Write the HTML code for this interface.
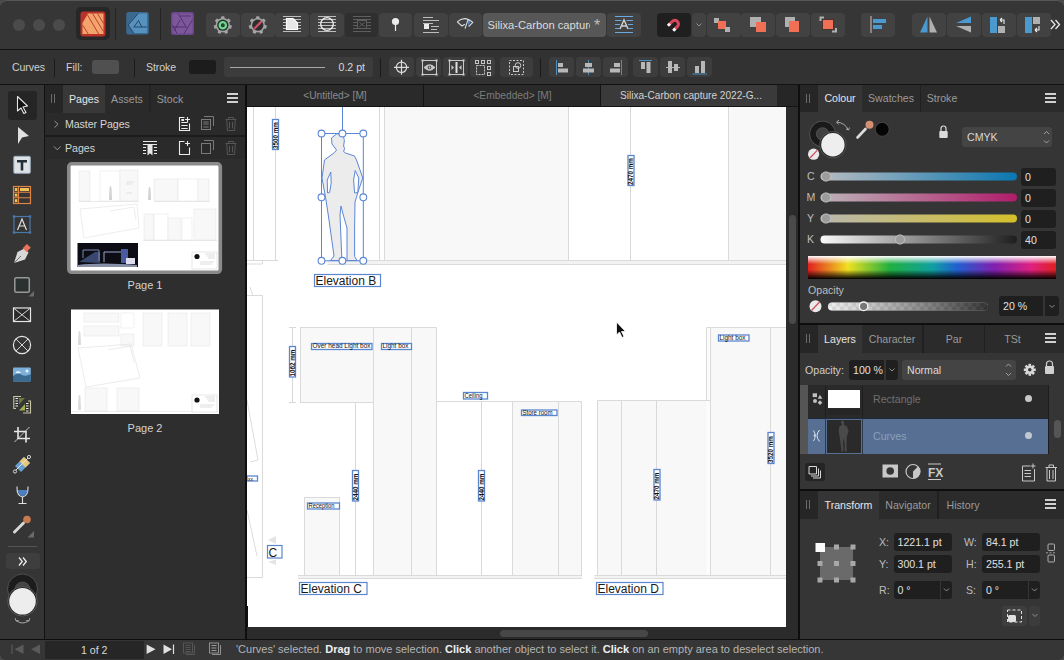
<!DOCTYPE html>
<html><head><meta charset="utf-8">
<style>
*{box-sizing:border-box;margin:0;padding:0}
html,body{width:1064px;height:660px;overflow:hidden;background:#4a4a4a}
body{position:relative;font-family:"Liberation Sans",sans-serif;color:#d8d8d8;font-size:12px;-webkit-font-smoothing:antialiased}
.a{position:absolute}
.btn{position:absolute;top:13px;height:24px;width:34px;background:#424242;border-radius:4px}
.cbtn{position:absolute;top:57px;height:20px;width:25px;background:#3d3d3d;border-radius:4px}
.sep{position:absolute;width:1px;background:#1f1f1f}
.tab{position:absolute;top:0;height:27px;line-height:27px;text-align:center;font-size:10.6px;color:#9a9a9a}
.tab.on{background:#383838;color:#e6e6e6}
.grip{position:absolute;left:0;top:0;width:18px;height:27px;background:#262626}
.grip:before{content:"";position:absolute;left:6px;top:9px;width:1px;height:9px;background:#6a6a6a;box-shadow:3px 0 0 #6a6a6a}
.ham{position:absolute;width:11px;height:10px;border-top:2px solid #d0d0d0;border-bottom:2px solid #d0d0d0}
.ham:before{content:"";position:absolute;left:0;top:2px;width:11px;height:2px;background:#d0d0d0}
.fld{position:absolute;background:#1f1f1f;border-radius:3px;color:#e0e0e0;font-size:10.6px;padding-left:4px;white-space:nowrap;overflow:hidden}
</style></head><body>

<!-- TOP TOOLBAR -->
<div class="a" id="top" style="left:0;top:0;width:1064px;height:49px;background:#363636;border-top:1px solid #575757;border-radius:7px 7px 0 0"></div>
<div class="a" style="left:0;top:49px;width:1064px;height:1px;background:#121212"></div>
<div class="a" style="left:13px;top:19px;width:12px;height:12px;border-radius:6px;background:#4b4b4b"></div>
<div class="a" style="left:33px;top:19px;width:12px;height:12px;border-radius:6px;background:#4b4b4b"></div>
<div class="a" style="left:53px;top:19px;width:12px;height:12px;border-radius:6px;background:#4b4b4b"></div>
<div class="a" style="left:76px;top:7px;width:34px;height:33px;border-radius:5px;background:#272727"></div>
<div class="sep" style="left:115px;top:8px;height:32px;background:#242424"></div>
<div class="sep" style="left:160px;top:8px;height:32px;background:#242424"></div>
<div class="btn" style="left:206px"></div>
<div class="btn" style="left:241px"></div>
<div class="btn" style="left:275px"></div>
<div class="btn" style="left:310px"></div>
<div class="btn" style="left:345px;width:33px;background:#2f2f2f"></div>
<div class="btn" style="left:379px;width:33px"></div>
<div class="btn" style="left:414px"></div>
<div class="btn" style="left:449px;width:33px"></div>
<div class="btn" style="left:483px;width:123px;background:#575757"></div>
<div class="a" style="left:487.5px;top:14px;height:22px;line-height:22px;font-size:11.2px;color:#dcdcdc;width:102px;overflow:hidden;white-space:nowrap">Silixa-Carbon capture 2022</div>
<div class="btn" style="left:607px"></div>
<div class="btn" style="left:657px;background:#1f1f1f"></div>
<div class="btn" style="left:692px;width:14px"></div>
<div class="btn" style="left:707px"></div>
<div class="btn" style="left:741px"></div>
<div class="btn" style="left:776px"></div>
<div class="btn" style="left:811px"></div>
<div class="btn" style="left:861px"></div>
<div class="btn" style="left:912px"></div>
<div class="btn" style="left:947px"></div>
<div class="btn" style="left:982px"></div>
<div class="btn" style="left:1017px"></div>
<svg class="a" style="left:0;top:0" width="1064" height="50" viewBox="0 0 1064 50">
 <!-- publisher -->
 <rect x="80.5" y="11.5" width="25" height="25" rx="3" fill="#b9332a"/>
 <path d="M88 13.5 H103.5 V34 H82.5 V23 Z" fill="#f3a36c"/>
 <g stroke="#b9332a" stroke-width="0.9">
  <line x1="87.5" y1="15" x2="99" y2="34.5"/><line x1="92.5" y1="13.5" x2="103.5" y2="31.5"/><line x1="97.5" y1="13.5" x2="103.5" y2="23.5"/><line x1="83" y1="25.5" x2="88.5" y2="34.5"/>
 </g>
 <!-- designer -->
 <rect x="126.2" y="12" width="22.6" height="22.6" rx="2.5" fill="#3a6890"/>
 <path d="M138.2 13.5 H147.2 V33 H133.8 L128.2 25 Z" fill="#5592bd"/>
 <path d="M138.2 13.5 L128.2 25 L133.8 33" fill="none" stroke="#27476a" stroke-width="1"/>
 <path d="M133.5 27 H147.2 M134 27 L138.5 20.5 L141.8 27" fill="none" stroke="#27476a" stroke-width="1"/>
 <!-- photo -->
 <rect x="171" y="12" width="23" height="23" rx="2.5" fill="#6a4788"/>
 <rect x="172.5" y="13.5" width="20" height="20" rx="1.5" fill="#7d569c"/>
 <g stroke="#4e3068" stroke-width="0.9" fill="none">
  <path d="M178 13.5 L186.5 27.5 M191 16 L180 16 M192.5 20 L184 33.5 M172.5 27 L186 27 M174 31 L180 20 M177 33.5 L172.5 25"/>
 </g>
 <!-- gears -->
 <g transform="translate(222.8,25.2)">
  <g fill="#a4a4a4"><circle r="7.2"/><rect x="-1.7" y="-9.0" width="3.4" height="3.5" rx="0.8" transform="rotate(0.0)"/><rect x="-1.7" y="-9.0" width="3.4" height="3.5" rx="0.8" transform="rotate(51.4)"/><rect x="-1.7" y="-9.0" width="3.4" height="3.5" rx="0.8" transform="rotate(102.9)"/><rect x="-1.7" y="-9.0" width="3.4" height="3.5" rx="0.8" transform="rotate(154.3)"/><rect x="-1.7" y="-9.0" width="3.4" height="3.5" rx="0.8" transform="rotate(205.7)"/><rect x="-1.7" y="-9.0" width="3.4" height="3.5" rx="0.8" transform="rotate(257.1)"/><rect x="-1.7" y="-9.0" width="3.4" height="3.5" rx="0.8" transform="rotate(308.6)"/></g>
  <circle r="5.6" fill="#1d3524"/><circle r="3.1" fill="none" stroke="#74d493" stroke-width="2.3"/><circle r="1.4" fill="#2a4a30"/>
 </g>
 <g transform="translate(257.8,25.2)">
  <g fill="#a4a4a4"><circle r="7.2"/><rect x="-1.7" y="-9.0" width="3.4" height="3.5" rx="0.8" transform="rotate(0.0)"/><rect x="-1.7" y="-9.0" width="3.4" height="3.5" rx="0.8" transform="rotate(51.4)"/><rect x="-1.7" y="-9.0" width="3.4" height="3.5" rx="0.8" transform="rotate(102.9)"/><rect x="-1.7" y="-9.0" width="3.4" height="3.5" rx="0.8" transform="rotate(154.3)"/><rect x="-1.7" y="-9.0" width="3.4" height="3.5" rx="0.8" transform="rotate(205.7)"/><rect x="-1.7" y="-9.0" width="3.4" height="3.5" rx="0.8" transform="rotate(257.1)"/><rect x="-1.7" y="-9.0" width="3.4" height="3.5" rx="0.8" transform="rotate(308.6)"/></g>
  <circle r="5.6" fill="#2e2e2e"/><line x1="-3.3" y1="3.3" x2="3.3" y2="-3.3" stroke="#d05068" stroke-width="2.2" stroke-linecap="round"/>
 </g>
 <!-- doc w/ lines -->
 <g stroke="#bdbdbd" stroke-width="1">
  <line x1="283" y1="16.5" x2="301" y2="16.5"/><line x1="283" y1="19.5" x2="301" y2="19.5"/><line x1="283" y1="22.5" x2="301" y2="22.5"/><line x1="283" y1="25.5" x2="301" y2="25.5"/><line x1="283" y1="28.5" x2="301" y2="28.5"/><line x1="283" y1="31.5" x2="301" y2="31.5"/>
 </g>
 <path d="M286.5 18.5 H293 L297.5 23 V29.5 H286.5 Z" fill="#e8e8e8" stroke="#fff" stroke-width="1.2"/>
 <g stroke="#bdbdbd" stroke-width="1">
  <line x1="318" y1="16.5" x2="336" y2="16.5"/><line x1="318" y1="19.5" x2="336" y2="19.5"/><line x1="318" y1="22.5" x2="336" y2="22.5"/><line x1="318" y1="25.5" x2="336" y2="25.5"/><line x1="318" y1="28.5" x2="336" y2="28.5"/><line x1="318" y1="31.5" x2="336" y2="31.5"/>
 </g>
 <circle cx="327" cy="24" r="6.3" fill="none" stroke="#f0f0f0" stroke-width="1.3"/>
 <!-- disabled X -->
 <g stroke="#5e5e5e" stroke-width="1">
  <line x1="353" y1="16.5" x2="371" y2="16.5"/><line x1="353" y1="19.5" x2="371" y2="19.5"/><line x1="353" y1="22.5" x2="358" y2="22.5"/><line x1="366" y1="22.5" x2="371" y2="22.5"/><line x1="353" y1="25.5" x2="358" y2="25.5"/><line x1="366" y1="25.5" x2="371" y2="25.5"/><line x1="353" y1="28.5" x2="358" y2="28.5"/><line x1="366" y1="28.5" x2="371" y2="28.5"/><line x1="353" y1="31.5" x2="371" y2="31.5"/>
  <rect x="357.5" y="20.5" width="9" height="8" fill="none"/><path d="M359.5 22.5 L364.5 26.5 M364.5 22.5 L359.5 26.5"/>
 </g>
 <!-- pin -->
 <circle cx="395.5" cy="21.5" r="3.6" fill="#ececec"/><line x1="395.5" y1="24" x2="395.5" y2="31" stroke="#ececec" stroke-width="1.2"/>
 <!-- text wrap -->
 <g stroke="#bdbdbd" stroke-width="1">
  <line x1="423" y1="17.5" x2="433" y2="17.5"/><line x1="423" y1="20.5" x2="439" y2="20.5"/><line x1="423" y1="23.5" x2="433" y2="23.5"/><line x1="431" y1="26.5" x2="439" y2="26.5"/><line x1="431" y1="29.5" x2="437" y2="29.5"/><line x1="423" y1="32.5" x2="439" y2="32.5"/>
 </g>
 <rect x="424" y="24" width="5" height="5" fill="#ececec"/>
 <!-- eye w/ blue -->
 <path d="M467.8 20 L470.5 21.3 L468.5 26.5 Z" fill="#4a88d0"/>
 <path d="M457.2 21.9 Q464.5 15 472.8 22.4 L468.7 26.6 M457.2 21.9 L462 26 L464.8 24.3 M467.9 20.1 L465 28.6" fill="none" stroke="#e0e0e0" stroke-width="1.1" stroke-linejoin="round"/>
 <!-- asterisk -->
 <text x="597" y="31" font-size="16" fill="#bdbdbd" text-anchor="middle" font-family="Liberation Sans">*</text>
 <!-- A text -->
 <g stroke="#6aa8e0" stroke-width="1.2">
  <path d="M615 16.5 H633 M615 20.5 H621.5 M626.5 20.5 H633 M615 24.5 H620 M628 24.5 H633 M615 28.5 H619.5 M628.5 28.5 H633 M615 32.5 H633"/>
 </g>
 <path d="M620 29 L624 19.8 L628 29 M621.3 26 H626.7" fill="none" stroke="#cfcfcf" stroke-width="1.5"/>
 <!-- magnet -->
 <path d="M669.2 24.5 L672.2 21.5 A3.6 3.6 0 0 1 677.5 26.4 L674.5 29.4" fill="none" stroke="#d9485a" stroke-width="3"/>
 <path d="M667.9 25.8 L670 23.7 M673.2 30.7 L675.3 28.6" stroke="#f4f4f4" stroke-width="3"/>
 <path d="M696.5 23.5 L699 26 L701.5 23.5" fill="none" stroke="#9a9a9a" stroke-width="0.9"/>
 <!-- arrange -->
 <rect x="714" y="18" width="5" height="5" fill="#b0b0b0"/><rect x="718" y="21" width="8" height="8" fill="#f07055"/><rect x="725" y="27" width="5" height="5" fill="#b0b0b0"/>
 <rect x="750" y="17" width="11" height="10" fill="#b0b0b0"/><rect x="756" y="22" width="10" height="10" fill="#f07055" stroke="#363636" stroke-width="0"/>
 <rect x="785" y="17" width="10" height="10" fill="#b0b0b0"/><rect x="789" y="21" width="10" height="11" fill="#f07055"/>
 <path d="M820.5 21 V17.5 H824" fill="none" stroke="#b0b0b0" stroke-width="2"/><path d="M836 28 V31.5 H832" fill="none" stroke="#b0b0b0" stroke-width="2"/><rect x="822.5" y="19.5" width="11" height="10" fill="#f07055" stroke="#3a2a28" stroke-width="0.8"/>
 <!-- align left -->
 <line x1="871" y1="16" x2="871" y2="33" stroke="#c8c8c8" stroke-width="1"/><rect x="873" y="19" width="13" height="4" fill="#4a9ad0"/><rect x="873" y="25" width="9" height="4" fill="#4a9ad0"/>
 <!-- flip h -->
 <path d="M927.5 16.5 V32.5 H920 Z" fill="#4a9ad0"/><path d="M929.5 16.5 V32.5 H937 Z" fill="#b0b0b0"/>
 <!-- flip v -->
 <path d="M956 23 L971 16.5 V23 Z" fill="#4a9ad0"/><path d="M956 26 L971 32.5 V26 Z" fill="#b0b0b0"/>
 <!-- rotate -->
 <rect x="990" y="17" width="7" height="16" fill="#4a9ad0"/><rect x="998" y="26" width="7" height="7" fill="#b0b0b0"/><path d="M1000 20 L1002 18 M1000 20 L1002 22 M1000 20 H1004 V24" fill="none" stroke="#eee" stroke-width="1.1"/>
 <rect x="1025" y="17" width="7" height="16" fill="#4a9ad0"/><rect x="1033" y="17" width="7" height="7" fill="#b0b0b0"/><path d="M1035 30 L1037 28 M1035 30 L1037 32 M1035 30 H1039 V26" fill="none" stroke="#eee" stroke-width="1.1"/>
 <path d="M1051 20 L1055 24.5 L1051 29 M1055.5 20 L1059.5 24.5 L1055.5 29" fill="none" stroke="#e8e8e8" stroke-width="1.3"/>
</svg>

<!-- CONTEXT TOOLBAR -->
<div class="a" id="ctx" style="left:0;top:50px;width:1064px;height:34px;background:#323232"></div>
<div class="a" style="left:0;top:84px;width:1064px;height:1px;background:#121212"></div>
<div class="a" style="left:12px;top:60px;font-size:10.6px;color:#cfcfcf;line-height:14px;letter-spacing:-0.1px">Curves</div>
<div class="sep" style="left:54px;top:59px;height:18px;background:#1a1a1a"></div>
<div class="a" style="left:66px;top:60px;font-size:10.6px;color:#cfcfcf;line-height:14px">Fill:</div>
<div class="a" style="left:92px;top:60px;width:27px;height:14px;border-radius:3px;background:#505050"></div>
<div class="sep" style="left:134px;top:59px;height:18px;background:#1a1a1a"></div>
<div class="a" style="left:146px;top:60px;font-size:10.6px;color:#cfcfcf;line-height:14px;letter-spacing:-0.1px">Stroke</div>
<div class="a" style="left:189px;top:60px;width:27px;height:14px;border-radius:3px;background:#1c1c1c"></div>
<div class="a" style="left:224px;top:57px;width:149px;height:20px;border-radius:3px;background:#3c3c3c"></div>
<div class="a" style="left:230px;top:67px;width:95px;height:1px;background:#a8a8a8"></div>
<div class="a" style="left:325px;top:60px;width:40px;text-align:right;font-size:10.6px;color:#d8d8d8;line-height:14px">0.2 pt</div>
<div class="sep" style="left:380px;top:58px;height:19px;background:#1a1a1a"></div>
<div class="cbtn" style="left:389px"></div>
<div class="cbtn" style="left:416px"></div>
<div class="cbtn" style="left:443px"></div>
<div class="cbtn" style="left:470px"></div>
<div class="cbtn" style="left:500px;width:33px"></div>
<div class="sep" style="left:540px;top:58px;height:19px;background:#1a1a1a"></div>
<div class="cbtn" style="left:549px"></div>
<div class="cbtn" style="left:576px"></div>
<div class="cbtn" style="left:603px"></div>
<div class="cbtn" style="left:633px"></div>
<div class="cbtn" style="left:660px"></div>
<div class="cbtn" style="left:687px"></div>
<svg class="a" style="left:0;top:50px" width="1064" height="34" viewBox="0 50 1064 34">
 <g stroke="#dcdcdc" stroke-width="1.2" fill="none">
  <circle cx="401.5" cy="67.3" r="5.2"/><path d="M394 67.3 H409 M401.5 59.8 V74.8"/>
 </g>
 <g stroke="#c8c8c8" stroke-width="1" fill="none">
  <rect x="422.5" y="60.5" width="14" height="14"/>
  <path d="M424 67.5 Q429.5 62 435 67.5 Q429.5 73 424 67.5 Z" fill="#c8c8c8"/>
 </g>
 <circle cx="429.5" cy="67.5" r="1.8" fill="#3d3d3d"/>
 <circle cx="429.5" cy="67.5" r="0.9" fill="#c8c8c8"/>
 <g fill="#d0d0d0"><rect x="421.5" y="59.5" width="2" height="2"/><rect x="435.5" y="59.5" width="2" height="2"/><rect x="421.5" y="73.5" width="2" height="2"/><rect x="435.5" y="73.5" width="2" height="2"/></g>
 <g stroke="#c8c8c8" stroke-width="1" fill="none">
  <rect x="449.5" y="60.5" width="14" height="14"/>
 </g>
 <rect x="455.5" y="62" width="2" height="11" fill="#e0e0e0"/>
 <path d="M451.5 65 L454 67.5 L451.5 70 Z M461.5 65 L459 67.5 L461.5 70 Z" fill="#c8c8c8"/>
 <g fill="#d0d0d0"><rect x="448.5" y="59.5" width="2" height="2"/><rect x="462.5" y="59.5" width="2" height="2"/><rect x="448.5" y="73.5" width="2" height="2"/><rect x="462.5" y="73.5" width="2" height="2"/></g>
 <g stroke="#c8c8c8" stroke-width="1" fill="none">
  <rect x="475.5" y="60.5" width="3" height="3"/><rect x="481.5" y="60.5" width="3" height="3"/><rect x="487.5" y="60.5" width="3" height="3"/>
  <rect x="487.5" y="66.5" width="3" height="3"/><rect x="487.5" y="72.5" width="3" height="3"/>
  <rect x="476.5" y="65.5" width="8" height="9" stroke-dasharray="2 1"/>
 </g>
 <g stroke="#c8c8c8" stroke-width="1" fill="none">
  <rect x="509.5" y="60.5" width="14" height="14" stroke-dasharray="2 1.5"/>
  <rect x="513.5" y="66.5" width="5" height="5"/><circle cx="518" cy="65.5" r="2.8"/>
 </g>
 <!-- align -->
 <line x1="556.5" y1="60" x2="556.5" y2="75" stroke="#4a8fc0" stroke-width="1"/>
 <rect x="558" y="63" width="5" height="4" fill="#b8b8b8"/><rect x="558" y="68.5" width="10" height="4" fill="#b8b8b8"/>
 <line x1="588.5" y1="60" x2="588.5" y2="75" stroke="#4a8fc0" stroke-width="1"/>
 <rect x="585" y="63" width="7" height="4" fill="#b8b8b8"/><rect x="583" y="68.5" width="11" height="4" fill="#b8b8b8"/>
 <line x1="621.5" y1="60" x2="621.5" y2="75" stroke="#4a8fc0" stroke-width="1"/>
 <rect x="614" y="63" width="6" height="4" fill="#b8b8b8"/><rect x="610" y="68.5" width="10" height="4" fill="#b8b8b8"/>
 <line x1="639" y1="60.5" x2="652" y2="60.5" stroke="#4a8fc0" stroke-width="1"/>
 <rect x="641" y="62" width="4" height="7" fill="#b8b8b8"/><rect x="646.5" y="62" width="4" height="11" fill="#b8b8b8"/>
 <line x1="666" y1="67.5" x2="680" y2="67.5" stroke="#b8b8b8" stroke-width="1"/>
 <rect x="668" y="61" width="4" height="12" fill="#b8b8b8"/><rect x="674" y="64" width="4" height="7" fill="#b8b8b8"/>
 <line x1="692.5" y1="74" x2="707" y2="74" stroke="#4a8fc0" stroke-width="1"/>
 <rect x="695" y="66" width="4" height="7" fill="#b8b8b8"/><rect x="701" y="61" width="4" height="12" fill="#b8b8b8"/>
</svg>

<!-- TOOLS COLUMN -->
<div class="a" id="tools" style="left:0;top:85px;width:44px;height:554px;background:#353535"></div>
<div class="a" style="left:44px;top:85px;width:1px;height:554px;background:#121212"></div>
<div class="a" style="left:8px;top:91px;width:29px;height:29px;border-radius:3px;background:#252525"></div>
<div class="a" style="left:6px;top:553px;width:34px;height:16px;border-radius:3px;background:#3e3e3e"></div>
<div class="a" style="left:8px;top:546px;width:29px;height:1px;background:#555"></div>
<svg class="a" style="left:0;top:85px" width="44" height="554" viewBox="0 85 44 554">
 <!-- select -->
 <path d="M17.5 96.5 L27.5 106 L23 107 L26 112.5 L23.8 113.5 L21 108 L17.5 111 Z" fill="#111" stroke="#e6e6e6" stroke-width="1.1" stroke-linejoin="round"/>
 <!-- node -->
 <path d="M18 127 L29 136 L22 137.5 L18 144 Z" fill="#e0e0e0"/>
 <!-- text T -->
 <rect x="13.8" y="156.3" width="16.5" height="17" rx="1" fill="#dfe3e6" stroke="#9ab" stroke-width="1"/>
 <path d="M17 160 H27 V162.5 H23.3 V170.5 H20.7 V162.5 H17 Z" fill="#22313c"/>
 <!-- table -->
 <rect x="13.5" y="186.5" width="17" height="17" fill="none" stroke="#e08545" stroke-width="1.2"/>
 <path d="M13.5 192.2 H30.5 M13.5 197.8 H30.5 M18.5 186.5 V203.5" stroke="#e08545" stroke-width="1.1"/>
 <rect x="14.8" y="188" width="2.6" height="3" fill="#f0c35a"/><rect x="20" y="188" width="9" height="3" fill="#f0c35a"/>
 <rect x="14.8" y="193.6" width="2.6" height="3" fill="#f0c35a"/><rect x="14.8" y="199.2" width="2.6" height="3" fill="#f0c35a"/>
 <!-- frame text A -->
 <rect x="14" y="216.5" width="16" height="16" fill="none" stroke="#4a78a8" stroke-width="1.2"/>
 <g fill="#4a78a8"><rect x="12.8" y="215.3" width="2.4" height="2.4"/><rect x="28.8" y="215.3" width="2.4" height="2.4"/><rect x="12.8" y="231.3" width="2.4" height="2.4"/><rect x="28.8" y="231.3" width="2.4" height="2.4"/></g>
 <path d="M17.5 230 L22 219 L26.5 230 M19 226 H25" fill="none" stroke="#e0e0e0" stroke-width="1.2"/>
 <!-- pen -->
 <path d="M14 263 L17.5 252 L24.5 248.5 L28.5 252.5 L25 259.5 Z" fill="#d8d8d8"/>
 <path d="M14 263 L21 256" stroke="#555" stroke-width="0.8"/>
 <rect x="24" y="245" width="5.5" height="6" fill="#e8735a" transform="rotate(45 26.8 248)"/>
 <!-- rect -->
 <rect x="14.8" y="277.8" width="14.5" height="14.5" rx="1.5" fill="#2b3030" stroke="#999" stroke-width="1.5"/>
 <path d="M34 291 V296.5 H28.5 Z" fill="#6a6a6a"/>
 <!-- frame X -->
 <rect x="13.5" y="308" width="17" height="13.5" fill="#2a2a2a" stroke="#e6e6e6" stroke-width="1.2"/>
 <path d="M13.5 308 L30.5 321.5 M30.5 308 L13.5 321.5" stroke="#e6e6e6" stroke-width="0.9"/>
 <!-- ellipse X -->
 <circle cx="22" cy="345" r="8.6" fill="none" stroke="#e6e6e6" stroke-width="1.2"/>
 <path d="M16 339 L28 351 M28 339 L16 351" stroke="#e6e6e6" stroke-width="0.9"/>
 <!-- picture -->
 <rect x="13" y="367.5" width="17.8" height="14" rx="1" fill="#7cb0d8"/>
 <path d="M13 376 Q18 372 22 375 Q26 377 30.8 374 V381.5 H13 Z" fill="#3a6a90"/>
 <path d="M15.5 373 Q17 370 19.5 371.5 L21 373 Z" fill="#eef"/><circle cx="27" cy="371" r="1.5" fill="#eef"/>
 <!-- place -->
 <path d="M21 396.5 H13.8 V408.5 H16" fill="none" stroke="#c8c8a0" stroke-width="1.1"/>
 <path d="M23 413 H30.5 V401 H28" fill="none" stroke="#c8c8a0" stroke-width="1.1"/>
 <g stroke="#ececec" stroke-width="1"><path d="M15.5 398.5 H18 M15.5 401 H18 M15.5 403.5 H18 M15.5 406 H18 M26 403.5 H28.5 M26 406 H28.5 M26 408.5 H28.5 M26 411 H28.5"/></g>
 <path d="M19 398 H25 L19 404.5 Z" fill="#6a7a3a"/>
 <path d="M25 404 V410.5 H19 Z" fill="#a0b050"/>
 <!-- crop -->
 <path d="M18 427 V438.5 H30 M14 431.5 H26 V442.5" fill="none" stroke="#e6e6e6" stroke-width="1.6"/>
 <path d="M14.5 442 L29.5 427" stroke="#e6e6e6" stroke-width="0.8"/>
 <!-- transparency -->
 <path d="M15 466 L24 457 L30 463 L21 472 Z" fill="#6aa0d0"/><path d="M19.5 461.5 L24 457 L30 463 L25.5 467.5 Z" fill="#e8c87a"/>
 <path d="M15 471 L29 457" stroke="#e6e6e6" stroke-width="1"/>
 <circle cx="15" cy="471.5" r="1.6" fill="#333" stroke="#e6e6e6" stroke-width="0.9"/><circle cx="29" cy="457" r="1.6" fill="#333" stroke="#e6e6e6" stroke-width="0.9"/>
 <!-- glass -->
 <path d="M17 486.5 Q16.5 496 22.5 497 Q28.5 496 28 486.5" fill="none" stroke="#e0e0e0" stroke-width="1.1"/>
 <path d="M18 490 H27.5 Q27.5 495.5 22.5 496 Q17.8 495.5 18 490 Z" fill="#4a80c0"/>
 <path d="M22.5 497 V503 M18.5 503.5 H26.5" stroke="#e0e0e0" stroke-width="1.1"/>
 <!-- dropper -->
 <path d="M14.5 532 L23.5 523" stroke="#d8d8d8" stroke-width="3" stroke-linecap="round"/>
 <circle cx="27" cy="519.5" r="3.8" fill="#c87a50"/>
 <path d="M34 531 V537.5 H27.5 Z" fill="#6a6a6a"/>
 <!-- >> -->
 <path d="M19 557.5 L22.3 561.5 L19 565.5 M23 557.5 L26.3 561.5 L23 565.5" fill="none" stroke="#ececec" stroke-width="1.3"/>
 <!-- colour -->
 <circle cx="22.5" cy="589" r="15" fill="#1c1c1c" stroke="#555" stroke-width="0.9"/>
 <circle cx="22.5" cy="589.5" r="7.5" fill="#444" stroke="#5a5a5a" stroke-width="0.7"/>
 <circle cx="22.5" cy="601.3" r="14.8" fill="#262626" stroke="#5e5e5e" stroke-width="0.9"/>
 <circle cx="22.5" cy="601.3" r="13.3" fill="#ededed"/>
 <path d="M16 620.5 Q22.5 625.5 29 620.5" fill="none" stroke="#aaa" stroke-width="1"/>
 <path d="M15.2 618 L16 621 L18.8 620.5 M29.8 618 L29 621 L26.2 620.5" fill="none" stroke="#aaa" stroke-width="0.9"/>
</svg>

<!-- PAGES PANEL -->
<div class="a" id="pages" style="left:45px;top:85px;width:200px;height:554px;background:#2e2e2e"></div>
<div class="a" style="left:45px;top:85px;width:200px;height:28px;background:#2a2a2a"></div>
<div class="grip" style="left:45px;top:85px;height:28px"></div>
<div class="tab on" style="left:63px;top:85px;width:42px;height:28px;line-height:28px;font-size:10.6px">Pages</div>
<div class="tab" style="left:105px;top:85px;width:44px;height:28px;line-height:28px;font-size:10.6px">Assets</div>
<div class="a" style="left:149px;top:85px;width:2px;height:28px;background:#232323"></div>
<div class="tab" style="left:151px;top:85px;width:38px;height:28px;line-height:28px;font-size:10.6px">Stock</div>
<div class="ham" style="left:227px;top:93px"></div>
<div class="a" style="left:45px;top:113px;width:200px;height:22px;background:#2a2a2a"></div>
<div class="a" style="left:45px;top:135px;width:200px;height:2px;background:#1c1c1c"></div>
<div class="a" style="left:45px;top:137px;width:200px;height:22px;background:#2a2a2a"></div>
<div class="a" style="left:65px;top:117px;font-size:10.6px;line-height:14px;color:#d6d6d6;letter-spacing:-0.05px">Master Pages</div>
<div class="a" style="left:65px;top:141px;font-size:10.6px;line-height:14px;color:#d6d6d6">Pages</div>
<div class="a" style="left:245px;top:85px;width:2px;height:554px;background:#0e0e0e"></div>
<svg class="a" style="left:45px;top:85px" width="200" height="554" viewBox="45 85 200 554">
 <path d="M54.5 121 L58 124.3 L54.5 127.6" fill="none" stroke="#9a9a9a" stroke-width="1"/>
 <path d="M54 146.5 L57.3 149.8 L60.6 146.5" fill="none" stroke="#9a9a9a" stroke-width="1"/>
 <!-- add master -->
 <path d="M184.5 117.5 H179.5 V130.5 H189.5 V123.5" fill="none" stroke="#ececec" stroke-width="1.1"/>
 <path d="M187.5 117 V122 M185 119.5 H190" stroke="#ececec" stroke-width="1.1"/>
 <rect x="181.3" y="119" width="2.8" height="2" fill="#ececec"/>
 <path d="M181.3 122.5 H187.7 M181.3 125.5 H187.7 M181.3 128.5 H187.7" stroke="#ececec" stroke-width="1"/>
 <path d="M204 116.5 H213.5 V126" fill="none" stroke="#7a7a7a" stroke-width="1"/>
 <rect x="201.5" y="119.5" width="9" height="10" fill="none" stroke="#7a7a7a" stroke-width="1"/>
 <path d="M203.3 122 H208.7 M203.3 124 H208.7 M203.3 127 H208.7" stroke="#7a7a7a" stroke-width="1"/>
 <g fill="none" stroke="#555" stroke-width="1"><path d="M225.5 119.5 H236.5 M228.5 119 V117.5 H233.5 V119 M226.8 120 L227.3 130.5 H234.7 L235.2 120 M229.5 122 V128.5 M232.5 122 V128.5"/></g>
 <!-- pages row icons -->
 <path d="M143 141.5 H157 M143 144.5 H157 M143 147.5 H146 M154 147.5 H157 M143 150.5 H146 M154 150.5 H157 M143 153.5 H146 M154 153.5 H157" stroke="#e8e8e8" stroke-width="1"/>
 <path d="M147.5 145 H152.5 V155.5 L150 153.3 L147.5 155.5 Z" fill="#e8e8e8"/>
 <path d="M184.5 141.5 H179.5 V154.5 H189.5 V147.5" fill="none" stroke="#ececec" stroke-width="1.1"/>
 <path d="M187.5 141 V146 M185 143.5 H190" stroke="#ececec" stroke-width="1.1"/>
 <path d="M204 140.5 H213.5 V150" fill="none" stroke="#7a7a7a" stroke-width="1"/>
 <rect x="201.5" y="143.5" width="9" height="10" fill="none" stroke="#7a7a7a" stroke-width="1"/>
 <g fill="none" stroke="#555" stroke-width="1"><path d="M225.5 143.5 H236.5 M228.5 143 V141.5 H233.5 V143 M226.8 144 L227.3 154.5 H234.7 L235.2 144 M229.5 146 V152.5 M232.5 146 V152.5"/></g>
 <!-- thumb 1 -->
 <rect x="68.8" y="163.8" width="151.5" height="108.5" rx="3" fill="#fff" stroke="#8a8a8a" stroke-width="3.6"/>
 <g fill="#f8f8f8" stroke="#e2e2e2" stroke-width="0.5">
  <rect x="79" y="171" width="11" height="30"/><rect x="100" y="171" width="20" height="30" fill="#fff"/><rect x="120" y="170" width="18" height="31"/>
  <rect x="154" y="179" width="24" height="22"/><rect x="178" y="179" width="20" height="22" fill="#fff"/><rect x="198" y="179" width="11" height="22"/>
  <rect x="144" y="214" width="10" height="26"/><rect x="154" y="214" width="14" height="26" fill="#fff"/><rect x="168" y="218" width="13" height="22"/><rect x="182" y="218" width="10" height="22" fill="#fff"/><rect x="194" y="209" width="22" height="31"/>
 </g>
 <path d="M79 201.5 H139 M154 201.5 H210 M143 240.5 H217" stroke="#dcdcdc" stroke-width="0.6"/>
 <path d="M80 209 L137 204 L139 228 L84 238 Z M110 211 L134 207 L136 220" fill="none" stroke="#dadada" stroke-width="0.5"/>
 <path d="M109.5 188 Q110.5 183.5 111.5 188 L112 200 H109 Z" fill="#d2d2d2"/><path d="M148.5 189 Q149.5 184.5 150.5 189 L151 200 H148 Z" fill="#d2d2d2"/>
 <path d="M126 182 H134 M126 184 H132 M126 193 H132" stroke="#cfcfcf" stroke-width="0.5"/>
 <rect x="77.5" y="243" width="60.5" height="24" fill="#0c0d14"/>
 <path d="M79 262 L95 252 L100 252 L100 263 Z" fill="#3a4870"/>
 <path d="M83 250 H99 V261 M83 250 V258" fill="none" stroke="#8a96c0" stroke-width="0.9"/>
 <path d="M104 252 H124 V262 M104 252 V262" fill="none" stroke="#aab4d8" stroke-width="0.9"/>
 <rect x="121" y="249" width="7" height="14" fill="#4a5aa0"/>
 <rect x="126" y="258" width="9" height="6" fill="#dde"/>
 <path d="M78 265 Q100 262 137 265 V267 H78 Z" fill="#8890a8"/>
 <rect x="192" y="252" width="25" height="17" fill="#fff" stroke="#cfcfcf" stroke-width="0.5"/>
 <circle cx="197" cy="256.5" r="2.6" fill="#111"/>
 <path d="M205 254 H215 M207 256 H215 M208 258 H215 M200 262 H214 M200 264 H212" stroke="#b8b8b8" stroke-width="0.5"/>
 <text x="145" y="289" font-size="11" fill="#d2d2d2" text-anchor="middle" font-family="Liberation Sans">Page 1</text>
 <!-- thumb 2 -->
 <rect x="71" y="309.5" width="148" height="104.5" fill="#fff"/>
 <g fill="#f8f8f8" stroke="#e2e2e2" stroke-width="0.5">
  <rect x="84" y="313" width="35" height="9"/><rect x="84" y="326" width="35" height="10"/><rect x="121" y="313" width="13" height="15" fill="#fff"/><rect x="121" y="334" width="13" height="12"/>
  <rect x="143" y="313" width="19" height="33"/><rect x="168" y="313" width="19" height="33"/><rect x="191" y="313" width="19" height="33"/>
  <rect x="85" y="388" width="22" height="23"/><rect x="117" y="388" width="22" height="23"/>
 </g>
 <path d="M78 348 L131 344 L140 378 L86 387 Z M108 350 L130 346 L134 362" fill="none" stroke="#d8d8d8" stroke-width="0.5"/>
 <path d="M78.5 333 Q79.5 328.5 80.5 333 L81 345 H78 Z" fill="#dadada"/><path d="M78.5 397 Q79.5 392.5 80.5 397 L81 410 H78 Z" fill="#dadada"/>
 <path d="M72 411.5 H218" stroke="#dcdcdc" stroke-width="0.5"/>
 <rect x="192" y="395" width="25" height="17" fill="#fff" stroke="#cfcfcf" stroke-width="0.5"/>
 <circle cx="197" cy="400" r="2.6" fill="#111"/>
 <path d="M205 397 H215 M207 399 H215 M208 401 H215 M200 405 H214 M200 407 H212" stroke="#b8b8b8" stroke-width="0.5"/>
 <text x="145" y="432" font-size="11" fill="#d2d2d2" text-anchor="middle" font-family="Liberation Sans">Page 2</text>
</svg>

<!-- CANVAS -->
<div class="a" id="doctabs" style="left:247px;top:85px;width:551px;height:21px;background:#262626"></div>
<div class="a" style="left:247px;top:85px;width:176px;height:21px;background:#2a2a2a;color:#8a8a8a;font-size:10.2px;line-height:21px;text-align:center;padding-left:0px">&lt;Untitled&gt; [M]</div>
<div class="a" style="left:423px;top:85px;width:1px;height:21px;background:#141414"></div>
<div class="a" style="left:424px;top:85px;width:177px;height:21px;background:#2a2a2a;color:#7c7c7c;font-size:10.2px;line-height:21px;text-align:center;padding-left:0px">&lt;Embedded&gt; [M]</div>
<div class="a" style="left:600px;top:85px;width:1px;height:21px;background:#141414"></div>
<div class="a" style="left:601px;top:85px;width:176px;height:21px;background:#3a3a3a;color:#d2d2d2;font-size:10.1px;line-height:21px;padding-left:19px;white-space:nowrap;overflow:hidden">Silixa-Carbon capture 2022-G...</div>
<div class="a" style="left:247px;top:106px;width:551px;height:1px;background:#141414"></div>
<div class="a" id="canvasbg" style="left:247px;top:107px;width:551px;height:532px;background:#2b2b2b"></div>
<div class="a" id="page" style="left:247px;top:107px;width:539px;height:520px;background:#fff"></div>
<div class="a" style="left:789px;top:215px;width:7px;height:109px;border-radius:4px;background:#4a4a4a"></div>
<div class="a" style="left:500px;top:630px;width:148px;height:7px;border-radius:4px;background:#474747"></div>
<svg class="a" style="left:247px;top:107px" width="539" height="520" viewBox="247 107 539 520" font-family="Liberation Sans">
 <g fill="#f8f8f8">
  <rect x="385" y="107" width="184" height="154"/>
  <rect x="729" y="107" width="57" height="154"/>
  <rect x="300.5" y="327" width="73.5" height="75.5"/><rect x="374" y="327" width="63" height="248.5"/>
  <rect x="512.5" y="401" width="69.5" height="174.5"/>
  <rect x="597.5" y="400.5" width="113.5" height="175"/>
  <rect x="706.5" y="327" width="4" height="248.5" fill="#fcfcfc"/><rect x="710.5" y="327" width="75.5" height="248.5"/>
  <rect x="304.5" y="497.5" width="35" height="78"/>
  <rect x="327.5" y="260.5" width="458.5" height="4" fill="#f2f2f2"/>
  <rect x="298" y="575.5" width="284" height="3" fill="#f2f2f2"/>
  <rect x="594.5" y="575.5" width="191.5" height="3" fill="#f2f2f2"/>
 </g>
  <g stroke="#dadada" stroke-width="1" fill="none">
  <path d="M253.5 107 V261 M379.5 107 V261 M384.5 107 V261 M568.5 107 V261 M728.5 107 V261"/>
  <path d="M247 260.5 H278 M262.5 260.5 V264 H247"/>
  <path d="M327.5 260.5 H786 M327.5 264.5 H786"/>
  <path d="M247 295.5 H262.5 V577.5 H247"/>
  <rect x="300.5" y="327.5" width="73" height="75"/>
  <path d="M373.5 327.5 H436.5 V575 M373.5 327.5 V575 M411.5 327.5 V575"/>
  <path d="M436.5 401.5 H581.5 M512.5 401.5 V575 M558.5 401.5 V575 M581.5 401.5 V575"/>
  <rect x="304.5" y="497.5" width="35" height="78"/>
  <path d="M298 575.5 H582 M298 578.5 H582"/>
  <path d="M597.5 400.5 H710.5 M597.5 400.5 V575 M621.5 400.5 V575 M706.5 327.5 H786 M706.5 327.5 V400.5 M710.5 327.5 V575 M770.5 327.5 V575"/>
  <path d="M594.5 575.5 H786 M594.5 578.5 H786"/>
 </g>
 <g stroke="#d8d8d8" stroke-width="1" fill="none">
  <path d="M275.5 107 V261 M630.5 107 V261 M292.5 327 V402.5 M289 327.5 H296 M289 402.5 H296 M355.5 402 V575 M481.5 401 V575 M656.5 400.5 V575"/>
 </g>
 <path d="M250 287 L253 296 M247 400 L258 460 L250 462 M247 510 L257 556" stroke="#dcdcdc" stroke-width="1" fill="none"/>
 <!-- labels -->
 <g fill="#fff" stroke="#5a86d0" stroke-width="1.3">
  <rect x="272.5" y="119.5" width="6" height="30"/>
  <rect x="628" y="155.5" width="6" height="30"/>
  <rect x="289.5" y="346.5" width="6" height="30.5"/>
  <rect x="311.5" y="343.5" width="60.5" height="6"/>
  <rect x="381.5" y="343.5" width="30" height="6"/>
  <rect x="463.5" y="392.5" width="24" height="6.5"/>
  <rect x="521.5" y="410" width="35.5" height="5.5"/>
  <rect x="718.5" y="335" width="30.5" height="6"/>
  <rect x="352.5" y="470.5" width="6" height="30.5"/>
  <rect x="478.5" y="470.5" width="6" height="30.5"/>
  <rect x="654" y="469.5" width="6" height="30.5"/>
  <rect x="768" y="432.5" width="6" height="31"/>
  <rect x="307.5" y="503" width="32" height="6"/>
  <rect x="247" y="476" width="10.5" height="5"/>
 </g>
 <g font-size="6.3" fill="#111" font-weight="bold">
  <text transform="translate(277.5,149) rotate(-90)">3500 mm</text>
  <text transform="translate(633,185) rotate(-90)">2470 mm</text>
  <text transform="translate(294.5,376.5) rotate(-90)">1062 mm</text>
  <text transform="translate(357.5,500.5) rotate(-90)">2440 mm</text>
  <text transform="translate(483.5,500.5) rotate(-90)">2440 mm</text>
  <text transform="translate(659,499.5) rotate(-90)">2470 mm</text>
  <text transform="translate(773,463) rotate(-90)">3520 mm</text>
 </g>
 <g font-size="6.3" fill="#111">
  <text x="312.5" y="348.2" textLength="58" lengthAdjust="spacingAndGlyphs">Over head Light box</text>
  <text x="382.5" y="348.2" textLength="26" lengthAdjust="spacingAndGlyphs">Light box</text>
  <text x="464.5" y="397.8" textLength="18" lengthAdjust="spacingAndGlyphs">Ceiling</text>
  <text x="522.5" y="414.6" textLength="30" lengthAdjust="spacingAndGlyphs">Store room</text>
  <text x="719.5" y="340" textLength="26" lengthAdjust="spacingAndGlyphs">Light box</text>
  <text x="308.5" y="508" textLength="26" lengthAdjust="spacingAndGlyphs">Reception</text>
  <text x="248" y="480.5" font-size="5">xx</text>
 </g>
 <g fill="#fff" stroke="#5a86d0" stroke-width="1.2">
  <rect x="314.5" y="274.5" width="66" height="12"/>
  <rect x="299.5" y="582.5" width="67.5" height="12"/>
  <rect x="596.5" y="582.5" width="66.5" height="12"/>
  <rect x="267.5" y="545.5" width="14.5" height="12.5"/>
 </g>
 <g font-size="12" fill="#1a1a1a">
  <text x="315.5" y="285">Elevation B</text>
  <text x="300.5" y="593">Elevation C</text>
  <text x="597.5" y="593">Elevation D</text>
  <text x="268.5" y="556.5">C</text>
 </g>
 <path d="M268 540 L276 536 V544 Z M268 562 L276 559.5 V565 Z" fill="#e4e4e4"/>
 <!-- person -->
 <path d="M336.5 134 C341 133 344.3 136 344.3 141 L343.6 146 L344.6 148.5 L343.6 151.5 L345.5 153 L354.5 156 L356.5 160 L362.8 178 L358 192 L355 202 L354.6 228 L354.6 256.5 L357 260.5 L347 260.5 L347 228 L343 214 L341 206 L340 215 L341.8 258 L341.5 260.5 L330.5 260.5 L334 256 L329 220 L326 200 L322 178 L324.5 160 L334.5 152.5 L336.5 150 L332 144 L331.5 138 Z" fill="#ececec" stroke="#5b86d6" stroke-width="1"/>
 <path d="M330.8 172 L327.2 180 L327.6 193 L329.6 192.5 L331.2 183 Z M355.2 170.5 L358.8 178 L357.8 192.5 L354.6 193 L353.6 180 Z" fill="#fff" stroke="#5b86d6" stroke-width="1"/>
 <!-- selection -->
 <g stroke="#5b86d6" stroke-width="1" fill="none">
  <rect x="321.5" y="133.5" width="41.8" height="127.3"/>
  <path d="M342.5 107 V130"/>
 </g>
 <g fill="#fff" stroke="#5b86d6" stroke-width="1.1">
  <circle cx="321.5" cy="133.5" r="3.4"/><circle cx="342.4" cy="133.5" r="3.4"/><circle cx="363.3" cy="133.5" r="3.4"/>
  <circle cx="321.5" cy="197.3" r="3.4"/><circle cx="363.3" cy="197.3" r="3.4"/>
  <circle cx="321.5" cy="260.8" r="3.4"/><circle cx="342.4" cy="260.8" r="3.4"/><circle cx="363.3" cy="260.8" r="3.4"/>
 </g>
 <!-- cursor -->
 <path d="M616.5 322 L616.5 335 L619.5 332 L622 337.5 L624 336.5 L621.5 331.5 L625.5 331.5 Z" fill="#111" stroke="#fff" stroke-width="0.8"/>
</svg>
<div class="a" style="left:786px;top:107px;width:12px;height:532px;background:#2c2c2c;z-index:-1"></div>
<div class="a" style="left:247px;top:606px;width:1px;height:21px;background:#0e0e0e"></div>

<!-- RIGHT PANELS -->
<div class="a" style="left:798px;top:85px;width:2px;height:554px;background:#0e0e0e"></div>
<div class="a" id="right" style="left:800px;top:85px;width:264px;height:554px;background:#353535"></div>
<!-- colour tabs -->
<div class="a" style="left:800px;top:85px;width:264px;height:27px;background:#262626"></div>
<div class="grip" style="left:800px;top:85px;height:27px"></div>
<div class="tab on" style="left:818px;top:85px;width:44px;font-size:10.6px;background:#353535">Colour</div>
<div class="tab" style="left:862px;top:85px;width:58px;font-size:10.6px;background:#2b2b2b">Swatches</div>
<div class="a" style="left:920px;top:85px;width:1px;height:27px;background:#202020"></div>
<div class="tab" style="left:921px;top:85px;width:42px;font-size:10.6px;background:#2b2b2b">Stroke</div>
<div class="a" style="left:963px;top:85px;width:101px;height:27px;background:#2b2b2b"></div>
<div class="ham" style="left:1045px;top:93px"></div>
<div class="a" style="left:962px;top:127px;width:90px;height:20px;border-radius:3px;background:#444;color:#d8d8d8;font-size:10.6px;line-height:20px;padding-left:5px">CMYK</div>
<div class="a" style="left:807px;top:169px;font-size:10.6px;color:#bdbdbd;line-height:14px">C</div>
<div class="a" style="left:806.5px;top:190px;font-size:10.6px;color:#bdbdbd;line-height:14px">M</div>
<div class="a" style="left:807px;top:211px;font-size:10.6px;color:#bdbdbd;line-height:14px">Y</div>
<div class="a" style="left:807px;top:232px;font-size:10.6px;color:#bdbdbd;line-height:14px">K</div>
<div class="fld" style="left:1021px;top:167.5px;width:35px;height:18.5px;line-height:19px">0</div>
<div class="fld" style="left:1021px;top:188.5px;width:35px;height:18.5px;line-height:19px">0</div>
<div class="fld" style="left:1021px;top:209.5px;width:35px;height:18.5px;line-height:19px">0</div>
<div class="fld" style="left:1021px;top:230.5px;width:35px;height:18.5px;line-height:19px">40</div>
<div class="a" style="left:808px;top:283px;font-size:10.6px;color:#bdbdbd;line-height:14px">Opacity</div>
<div class="fld" style="left:999px;top:296px;width:44px;height:20px;line-height:20px;border-radius:3px 0 0 3px">20 %</div>
<div class="fld" style="left:1045px;top:296px;width:14px;height:20px;border-radius:0 3px 3px 0"></div>
<div class="a" style="left:808px;top:255.5px;width:247.5px;height:23.5px;background:linear-gradient(to bottom,rgba(255,255,255,1) 0%,rgba(255,255,255,0) 35%,rgba(0,0,0,0) 60%,rgba(0,0,0,1) 100%),linear-gradient(to right,#e02020 0%,#f0e020 16%,#20b040 33%,#10a0a0 50%,#2060d0 60%,#8020b0 75%,#e02080 90%,#e02020 100%)"></div>
<div class="a" style="left:800px;top:323px;width:264px;height:2px;background:#0e0e0e"></div>
<!-- layers -->
<div class="a" style="left:800px;top:325px;width:264px;height:28px;background:#262626"></div>
<div class="grip" style="left:800px;top:325px;height:28px"></div>
<div class="tab on" style="left:818px;top:325px;width:44px;height:28px;line-height:28px;font-size:10.6px;background:#353535">Layers</div>
<div class="tab" style="left:862px;top:325px;width:60px;height:28px;line-height:28px;font-size:10.6px;background:#2b2b2b">Character</div>
<div class="a" style="left:922px;top:325px;width:2px;height:28px;background:#202020"></div>
<div class="tab" style="left:924px;top:325px;width:60px;height:28px;line-height:28px;font-size:10.6px;background:#2b2b2b">Par</div>
<div class="a" style="left:984px;top:325px;width:1px;height:28px;background:#202020"></div>
<div class="tab" style="left:985px;top:325px;width:55px;height:28px;line-height:28px;font-size:10.6px;background:#2b2b2b">TSt</div>
<div class="a" style="left:1040px;top:325px;width:24px;height:28px;background:#2b2b2b"></div>
<div class="ham" style="left:1045px;top:333px"></div>
<div class="a" style="left:805px;top:363px;font-size:10.6px;color:#cfcfcf;line-height:14px">Opacity:</div>
<div class="fld" style="left:849px;top:360px;width:35px;height:19.5px;line-height:20px;border-radius:3px 0 0 3px">100 %</div>
<div class="fld" style="left:886px;top:360px;width:12px;height:19.5px;border-radius:0 3px 3px 0"></div>
<div class="a" style="left:902px;top:360px;width:114px;height:19.5px;border-radius:3px;background:#444;color:#dcdcdc;font-size:10.6px;line-height:20px;padding-left:5px">Normal</div>
<div class="a" style="left:800px;top:385px;width:264px;height:104px;background:#353535"></div>
<div class="a" style="left:800px;top:385px;width:8px;height:69px;background:#555"></div>
<div class="a" style="left:808px;top:385px;width:240px;height:33px;background:#2a2a2a"></div>
<div class="a" style="left:825px;top:385px;width:1px;height:33px;background:#1e1e1e"></div>
<div class="a" style="left:862px;top:385px;width:1px;height:33px;background:#1e1e1e"></div>
<div class="a" style="left:828px;top:390px;width:32px;height:18px;background:#fff"></div>
<div class="a" style="left:828px;top:409px;width:32px;height:6px;background:#262626"></div>
<div class="a" style="left:873px;top:392px;font-size:10.6px;color:#707070;line-height:14px">Rectangle</div>
<div class="a" style="left:808px;top:418px;width:240px;height:36px;background:#566f93;border-top:1px solid #1e2a3a"></div>
<div class="a" style="left:825px;top:418px;width:1px;height:36px;background:#2a3a50"></div>
<div class="a" style="left:826px;top:419px;width:36px;height:35px;background:#2a2a2a;border:1px solid #566f93"></div>
<div class="a" style="left:862px;top:418px;width:1px;height:36px;background:#2a3a50"></div>
<div class="a" style="left:873px;top:429px;font-size:10.6px;color:#8ba0bd;line-height:14px">Curves</div>
<div class="a" style="left:1048px;top:385px;width:1px;height:69px;background:#1e1e1e"></div>
<div class="a" style="left:1053.5px;top:420px;width:7.5px;height:17.5px;border-radius:4px;background:#555"></div>
<div class="a" style="left:805px;top:462.5px;width:20px;height:18.5px;border-radius:3px;background:#242424"></div>
<div class="a" style="left:800px;top:489px;width:264px;height:2px;background:#0e0e0e"></div>
<!-- transform -->
<div class="a" style="left:800px;top:491px;width:264px;height:28px;background:#262626"></div>
<div class="grip" style="left:800px;top:491px;height:28px"></div>
<div class="tab on" style="left:818px;top:491px;width:61px;height:28px;line-height:28px;font-size:10.6px;background:#353535">Transform</div>
<div class="tab" style="left:879px;top:491px;width:58px;height:28px;line-height:28px;font-size:10.6px;background:#2b2b2b">Navigator</div>
<div class="a" style="left:937px;top:491px;width:2px;height:28px;background:#202020"></div>
<div class="tab" style="left:939px;top:491px;width:48px;height:28px;line-height:28px;font-size:10.6px;background:#2b2b2b">History</div>
<div class="a" style="left:987px;top:491px;width:77px;height:28px;background:#2b2b2b"></div>
<div class="ham" style="left:1045px;top:499px"></div>
<div class="a" style="left:879px;top:535px;font-size:10.6px;color:#bdbdbd;line-height:14px">X:</div>
<div class="a" style="left:879px;top:557px;font-size:10.6px;color:#bdbdbd;line-height:14px">Y:</div>
<div class="a" style="left:879px;top:583px;font-size:10.6px;color:#bdbdbd;line-height:14px">R:</div>
<div class="a" style="left:964px;top:535px;font-size:10.6px;color:#bdbdbd;line-height:14px">W:</div>
<div class="a" style="left:966px;top:557px;font-size:10.6px;color:#bdbdbd;line-height:14px">H:</div>
<div class="a" style="left:966px;top:583px;font-size:10.6px;color:#bdbdbd;line-height:14px">S:</div>
<div class="fld" style="left:893.5px;top:533px;width:58.5px;height:18px;line-height:18px">1221.1 pt</div>
<div class="fld" style="left:893.5px;top:555px;width:58.5px;height:18px;line-height:18px">300.1 pt</div>
<div class="fld" style="left:893.5px;top:581px;width:46px;height:18px;line-height:18px;border-radius:3px 0 0 3px">0 °</div>
<div class="fld" style="left:941px;top:581px;width:11px;height:18px;border-radius:0 3px 3px 0"></div>
<div class="fld" style="left:982px;top:533px;width:58px;height:18px;line-height:18px">84.1 pt</div>
<div class="fld" style="left:982px;top:555px;width:58px;height:18px;line-height:18px">255.1 pt</div>
<div class="fld" style="left:982px;top:581px;width:46px;height:18px;line-height:18px;border-radius:3px 0 0 3px">0 °</div>
<div class="fld" style="left:1029px;top:581px;width:11px;height:18px;border-radius:0 3px 3px 0"></div>
<div class="a" style="left:1002px;top:606px;width:25px;height:19.5px;border-radius:3px;background:#3e3e3e"></div>
<div class="a" style="left:1029px;top:606px;width:11px;height:19.5px;border-radius:3px;background:#3c3c3c"></div>
<svg class="a" style="left:800px;top:85px" width="264" height="554" viewBox="800 85 264 554">
 <!-- colour wells -->
 <circle cx="822.6" cy="134" r="13.2" fill="#5a5a5a"/>
 <circle cx="822.6" cy="134" r="12.5" fill="#1a1a1a"/>
 <circle cx="822.6" cy="134" r="6.3" fill="#404040" stroke="#5a5a5a" stroke-width="0.7"/>
 <circle cx="832.9" cy="144.8" r="13.5" fill="#5a5a5a"/>
 <circle cx="832.9" cy="144.8" r="12.8" fill="#262626"/>
 <circle cx="832.9" cy="144.8" r="11.7" fill="#eeeeee"/>
 <circle cx="813.6" cy="154.2" r="5.6" fill="#eaeaea"/>
 <path d="M810 158 L817.2 150.4" stroke="#d05060" stroke-width="1.3"/>
 <path d="M837 122 Q845 123 848.5 130 M836.5 122 L839 120 M836.5 122 L838.5 124.5 M848.5 130 L846 129 M848.5 130 L849.5 127.5" fill="none" stroke="#aaa" stroke-width="1"/>
 <path d="M857.5 137.5 L865.5 129" stroke="#dcdcdc" stroke-width="2.6" stroke-linecap="round"/>
 <circle cx="869.5" cy="124.8" r="4" fill="#d49070"/>
 <circle cx="882.2" cy="129.3" r="7.3" fill="#4a4a4a"/>
 <circle cx="882.2" cy="129.3" r="6.5" fill="#050505"/>
 <!-- lock -->
 <path d="M941 131 V128.5 A2.5 2.5 0 0 1 946 128.5 V131" fill="none" stroke="#dcdcdc" stroke-width="1.2"/>
 <rect x="939.3" y="131" width="8.4" height="7" rx="1" fill="#dcdcdc"/>
 <path d="M1044 134 L1046.5 131.5 L1049 134 M1044 140.5 L1046.5 143 L1049 140.5" fill="none" stroke="#aaa" stroke-width="0.9"/>
 <!-- sliders -->
 <defs>
  <linearGradient id="gC"><stop offset="0" stop-color="#b8bcc0"/><stop offset="1" stop-color="#0a76b0"/></linearGradient>
  <linearGradient id="gM"><stop offset="0" stop-color="#bcb4b8"/><stop offset="1" stop-color="#b01c6a"/></linearGradient>
  <linearGradient id="gY"><stop offset="0" stop-color="#bab8b0"/><stop offset="1" stop-color="#d4c02a"/></linearGradient>
  <linearGradient id="gK"><stop offset="0" stop-color="#fafafa"/><stop offset="1" stop-color="#1e1e1e"/></linearGradient>
  <pattern id="chk" width="8" height="8" patternUnits="userSpaceOnUse" x="828" y="302.5"><rect width="8" height="8" fill="#c8c8c8"/><rect width="4" height="4" fill="#8a8a8a"/><rect x="4" y="4" width="4" height="4" fill="#8a8a8a"/></pattern>
  <linearGradient id="gO"><stop offset="0" stop-color="#fff" stop-opacity="0.7"/><stop offset="1" stop-color="#202020" stop-opacity="0.85"/></linearGradient>
 </defs>
 <rect x="820.5" y="172.5" width="196.5" height="8" rx="4" fill="url(#gC)"/>
 <rect x="820.5" y="193.5" width="196.5" height="8" rx="4" fill="url(#gM)"/>
 <rect x="820.5" y="214.5" width="196.5" height="8" rx="4" fill="url(#gY)"/>
 <rect x="820.5" y="235.5" width="196.5" height="8" rx="4" fill="url(#gK)"/>
 <g fill="#9c9c9c" stroke="#c4c4c4" stroke-width="0.9">
  <circle cx="826" cy="176.5" r="4.6"/><circle cx="826" cy="197.5" r="4.6"/><circle cx="826" cy="218.5" r="4.6"/><circle cx="900" cy="239.5" r="4.6"/>
 </g>
 <!-- opacity -->
 <circle cx="815.5" cy="306.2" r="6" fill="#eaeaea"/>
 <path d="M811.5 310.5 L819.5 302" stroke="#d05060" stroke-width="1.3"/>
 <rect x="828" y="302.5" width="160" height="8" rx="4" fill="url(#chk)"/>
 <rect x="828" y="302.5" width="160" height="8" rx="4" fill="url(#gO)"/>
 <circle cx="863.6" cy="306.3" r="4.3" fill="#777" stroke="#f4f4f4" stroke-width="1.4"/>
 <path d="M1049.5 305 L1052 307.5 L1054.5 305" fill="none" stroke="#9a9a9a" stroke-width="0.9"/>
 <!-- layers controls -->
 <path d="M889.5 368.5 L892 371 L894.5 368.5" fill="none" stroke="#9a9a9a" stroke-width="0.9"/>
 <path d="M1006 366.5 L1008.5 364 L1011 366.5 M1006 373 L1008.5 375.5 L1011 373" fill="none" stroke="#aaa" stroke-width="0.9"/>
 <g transform="translate(1029.8,369.8)"><circle r="4.2" fill="#d8d8d8"/>
  <g fill="#d8d8d8"><rect x="-1.3" y="-6" width="2.6" height="12"/><rect x="-1.3" y="-6" width="2.6" height="12" transform="rotate(45)"/><rect x="-1.3" y="-6" width="2.6" height="12" transform="rotate(90)"/><rect x="-1.3" y="-6" width="2.6" height="12" transform="rotate(135)"/></g>
  <circle r="1.8" fill="#353535"/></g>
 <path d="M1046.5 366 V364 A3 3 0 0 1 1052.5 364 V366" fill="none" stroke="#d0d0d0" stroke-width="1.2"/>
 <rect x="1045" y="366" width="9" height="8" rx="1" fill="#d0d0d0"/>
 <!-- layer row icons -->
 <g fill="#c0c0c0"><rect x="812.7" y="393.3" width="4.3" height="3.8"/><path d="M820 394.8 L822.3 398.8 H817.7 Z"/><circle cx="815" cy="401" r="2"/><path d="M820 400.3 L822.3 402.7 L820 405 L817.7 402.7 Z"/></g>
 <path d="M819.5 430 Q814.5 435.5 819.5 441.5" fill="none" stroke="#dfe6f0" stroke-width="1"/>
 <path d="M813.5 430.5 Q817 435.5 813.5 441" fill="none" stroke="#dfe6f0" stroke-width="0.9"/>
 <circle cx="814.6" cy="435.6" r="1" fill="#dfe6f0"/>
 <circle cx="1028.5" cy="398.5" r="3.5" fill="#c8c8c8"/>
 <circle cx="1028.5" cy="435.5" r="3.5" fill="#c0c8d4"/>
 <path transform="translate(838.5,420.4) scale(0.245) translate(-321.5,-133.5)" d="M336.5 134 C341 133 344.3 136 344.3 141 L343.6 146 L344.6 148.5 L343.6 151.5 L345.5 153 L354.5 156 L356.5 160 L362.8 178 L358 192 L355 202 L354.6 228 L354.6 256.5 L357 260.5 L347 260.5 L347 228 L343 214 L341 206 L340 215 L341.8 258 L341.5 260.5 L330.5 260.5 L334 256 L329 220 L326 200 L322 178 L324.5 160 L334.5 152.5 L336.5 150 L332 144 L331.5 138 Z" fill="#4a4a4a"/>
 <!-- layers bottom -->
 <path d="M809 466.5 H816.5 V474 H809 Z M811 476 H818.5 V468.5 M813 478 H820.5 V470.5" fill="none" stroke="#d8d8d8" stroke-width="1"/>
 <rect x="882.5" y="464.5" width="15.5" height="13" fill="#c8c8c8"/><circle cx="890.2" cy="471" r="3.8" fill="#353535"/>
 <circle cx="913" cy="471.5" r="7" fill="none" stroke="#c8c8c8" stroke-width="1.2"/>
 <path d="M913 471.5 L918 466.5 A7 7 0 0 1 913 478.5 Z" fill="#c8c8c8"/>
 <text x="928" y="477" font-family="Liberation Sans" font-size="12" font-weight="bold" fill="#c8c8c8">FX</text>
 <path d="M928 464 H941 M928 479.5 H941" stroke="#c8c8c8" stroke-width="1"/>
 <path d="M1022.5 466 H1030 M1034.5 469 V481 H1022.5 V466 M1024.5 470.5 H1031 M1024.5 473.5 H1031 M1024.5 476.5 H1031 M1033 463.5 V468.5 M1030.5 466 H1035.5" fill="none" stroke="#c8c8c8" stroke-width="1"/>
 <path d="M1045.5 467.5 H1057 M1049 467 V465 H1053.5 V467 M1047 468 V481 H1055.5 V468 M1049.5 470 V479 M1053 470 V479" fill="none" stroke="#c8c8c8" stroke-width="1"/>
 <!-- anchor -->
 <rect x="820" y="547" width="33" height="33" fill="#6a6a6a"/>
 <g fill="#a8a8a8"><rect x="834" y="544.5" width="5" height="5"/><rect x="850.5" y="544.5" width="5" height="5"/><rect x="817.5" y="561" width="5" height="5"/><rect x="834" y="561" width="5" height="5"/><rect x="850.5" y="561" width="5" height="5"/><rect x="817.5" y="577.5" width="5" height="5"/><rect x="834" y="577.5" width="5" height="5"/><rect x="850.5" y="577.5" width="5" height="5"/></g>
 <rect x="815.5" y="543" width="9.5" height="9" fill="#fafafa"/>
 <path d="M1032 588.5 L1034.5 591 L1037 588.5" fill="none" stroke="#9a9a9a" stroke-width="0.9"/>
 <path d="M944 588.5 L946.5 591 L949 588.5" fill="none" stroke="#9a9a9a" stroke-width="0.9"/>
 <path d="M1032.5 614 L1035 616.5 L1037.5 614" fill="none" stroke="#9a9a9a" stroke-width="0.9"/>
 <rect x="1048" y="544" width="6.5" height="6.5" rx="1" fill="none" stroke="#bbb" stroke-width="0.9"/>
 <rect x="1048" y="555" width="6.5" height="7" rx="1" fill="none" stroke="#bbb" stroke-width="0.9"/>
 <path d="M1046 552.8 H1056" stroke="#bbb" stroke-width="0.8" stroke-dasharray="2 1.5"/>
 <rect x="1007.5" y="610" width="14" height="12" fill="none" stroke="#e0e0e0" stroke-width="1" stroke-dasharray="3 2"/>
 <rect x="1008" y="615" width="8" height="7" rx="1.5" fill="#e0e0e0"/>
</svg>

<!-- STATUS BAR -->
<div class="a" id="status" style="left:0;top:639px;width:1064px;height:21px;background:#363636;border-top:1px solid #0e0e0e;border-radius:0 0 6px 6px"></div>
<div class="a" style="left:44.5px;top:641px;width:99.5px;height:18px;background:#262626"></div>
<div class="a" style="left:44.5px;top:641px;width:99.5px;height:18px;line-height:18px;text-align:center;font-size:10.6px;color:#d8d8d8">1 of 2</div>
<div class="a" style="left:236px;top:642px;height:15px;line-height:15px;font-size:11px;color:#b4b4b4;white-space:nowrap">'Curves' selected. <b style="color:#f0f0f0">Drag</b> to move selection. <b style="color:#f0f0f0">Click</b> another object to select it. <b style="color:#f0f0f0">Click</b> on an empty area to deselect selection.</div>
<svg class="a" style="left:0;top:639px" width="240" height="21" viewBox="0 639 240 21">
 <path d="M12 644.5 V654" stroke="#5a5a5a" stroke-width="1.2"/>
 <path d="M23.5 644.5 V654 L14.5 649.2 Z" fill="#5a5a5a"/>
 <path d="M40 644.5 V654 L31 649.2 Z" fill="#5a5a5a"/>
 <path d="M146.6 644.5 V654 L155.5 649.2 Z" fill="#e0e0e0"/>
 <path d="M163.5 644.5 V654 L172 649.2 Z" fill="#e0e0e0"/>
 <path d="M173.5 644.5 V654" stroke="#e0e0e0" stroke-width="1.2"/>
 <path d="M186 654.5 H194.5 V645" fill="none" stroke="#5a5a5a" stroke-width="0.9"/>
 <rect x="183.5" y="643" width="9" height="10" fill="none" stroke="#5a5a5a" stroke-width="0.9"/>
 <path d="M185.5 645.5 H190.5 M185.5 647.5 H190.5 M185.5 649.5 H190.5 M185.5 651.5 H190.5" stroke="#5a5a5a" stroke-width="0.8"/>
 <path d="M212 654.5 H220.5 V645" fill="none" stroke="#9a9a9a" stroke-width="0.9"/>
 <rect x="209.5" y="643" width="9" height="10" fill="none" stroke="#9a9a9a" stroke-width="0.9"/>
 <path d="M211.5 645.5 H216.5 M211.5 648 H216.5 M211.5 650.5 H216.5" stroke="#9a9a9a" stroke-width="1.2"/>
</svg>

</body></html>
